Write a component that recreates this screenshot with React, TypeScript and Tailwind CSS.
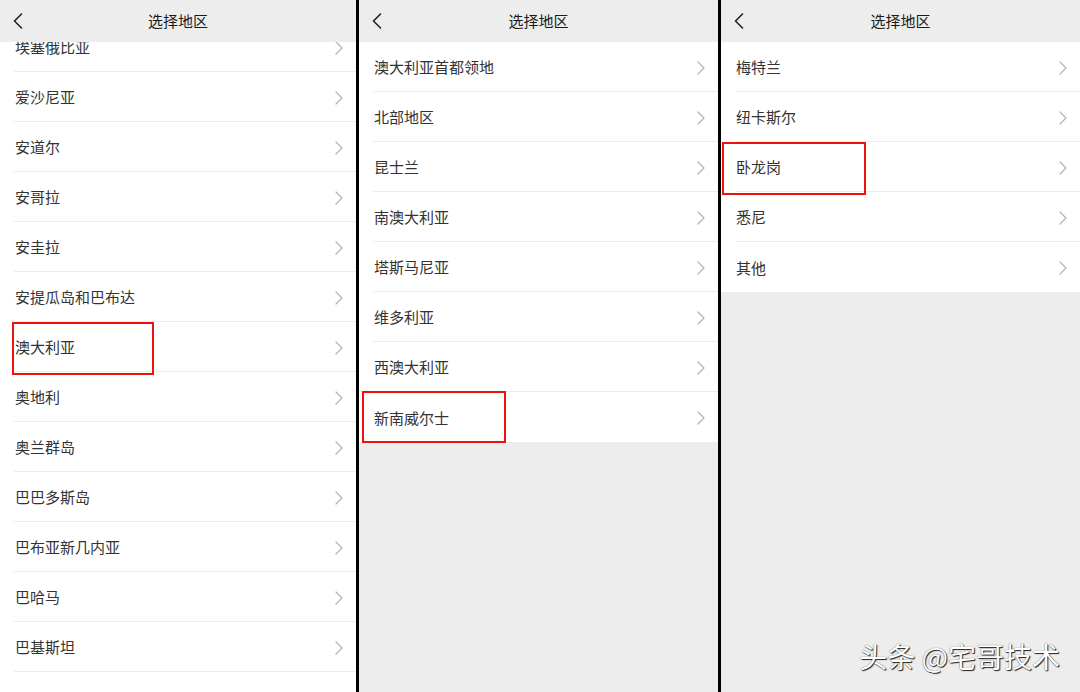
import React from "react";

const FONT = { fontFamily: '"Noto Sans CJK SC", "Noto Sans", sans-serif' };

function Chevron() {
  return (
    <svg width="8" height="14" viewBox="0 0 8 14" className="shrink-0">
      <path d="M1 1 L7 7 L1 13" fill="none" stroke="#b5b5b5" strokeWidth="1.3" strokeLinecap="round" strokeLinejoin="round" />
    </svg>
  );
}

function Back() {
  return (
    <svg width="10" height="16" viewBox="0 0 10 16">
      <path d="M8.5 1 L1.5 8 L8.5 15" fill="none" stroke="#222" strokeWidth="1.6" strokeLinecap="round" strokeLinejoin="round" />
    </svg>
  );
}

function Header() {
  return (
    <div className="relative z-10 h-[42px] shrink-0 bg-[#ededed] flex items-center px-[13px]">
      <Back />
      <div className="flex-1 text-center text-[15px] text-[#1a1a1a] pr-[10px]">选择地区</div>
    </div>
  );
}

function Row({ label, last }: { label: string; last?: boolean }) {
  return (
    <div className="bg-white pl-[14px]">
      <div
        className={
          "h-[50px] flex items-center justify-between pr-[13px] pl-[1px] pt-[2px] " +
          (last ? "" : "border-b border-[#ececec]")
        }
      >
        <span className="text-[15px] text-[#333]">{label}</span>
        {label ? <Chevron /> : null}
      </div>
    </div>
  );
}

function Panel({
  items,
  width,
  offset,
  box,
}: {
  items: string[];
  width: string;
  offset?: boolean;
  box: React.ReactNode;
}) {
  return (
    <div className={"relative h-full flex flex-col overflow-hidden bg-[#ededed] " + width}>
      <Header />
      <div className={offset ? "-mt-[20px]" : ""}>
        {items.map((t, i) => (
          <Row key={i} label={t} last={!offset && i === items.length - 1} />
        ))}
      </div>
      {box}
    </div>
  );
}

export default function App() {
  const p1 = [
    "埃塞俄比亚",
    "爱沙尼亚",
    "安道尔",
    "安哥拉",
    "安圭拉",
    "安提瓜岛和巴布达",
    "澳大利亚",
    "奥地利",
    "奥兰群岛",
    "巴巴多斯岛",
    "巴布亚新几内亚",
    "巴哈马",
    "巴基斯坦",
    "",
  ];
  const p2 = [
    "澳大利亚首都领地",
    "北部地区",
    "昆士兰",
    "南澳大利亚",
    "塔斯马尼亚",
    "维多利亚",
    "西澳大利亚",
    "新南威尔士",
  ];
  const p3 = ["梅特兰", "纽卡斯尔", "卧龙岗", "悉尼", "其他"];

  return (
    <div className="w-[1080px] h-[692px] flex bg-[#ededed] relative overflow-hidden" style={FONT}>
      <Panel
        items={p1}
        width="w-[356px]"
        offset
        box={<div className="absolute left-[12px] top-[322px] w-[142px] h-[53px] border-2 border-[#f01010] z-20" />}
      />
      <div className="w-[3px] h-full bg-black shrink-0" />
      <Panel
        items={p2}
        width="w-[359px]"
        box={<div className="absolute left-[3px] top-[391px] w-[144px] h-[52px] border-2 border-[#f01010] z-20" />}
      />
      <div className="w-[3px] h-full bg-black shrink-0" />
      <Panel
        items={p3}
        width="w-[359px]"
        box={<div className="absolute left-[1px] top-[142px] w-[144px] h-[53px] border-2 border-[#f01010] z-20" />}
      />
      <div
        className="absolute right-[20px] bottom-[22px] text-[28px] leading-none text-white z-30 whitespace-nowrap"
        style={{ textShadow: "1px 1px 1px #222, 0 0 1px #444" }}
      >
        头条 @宅哥技术
      </div>
    </div>
  );
}
